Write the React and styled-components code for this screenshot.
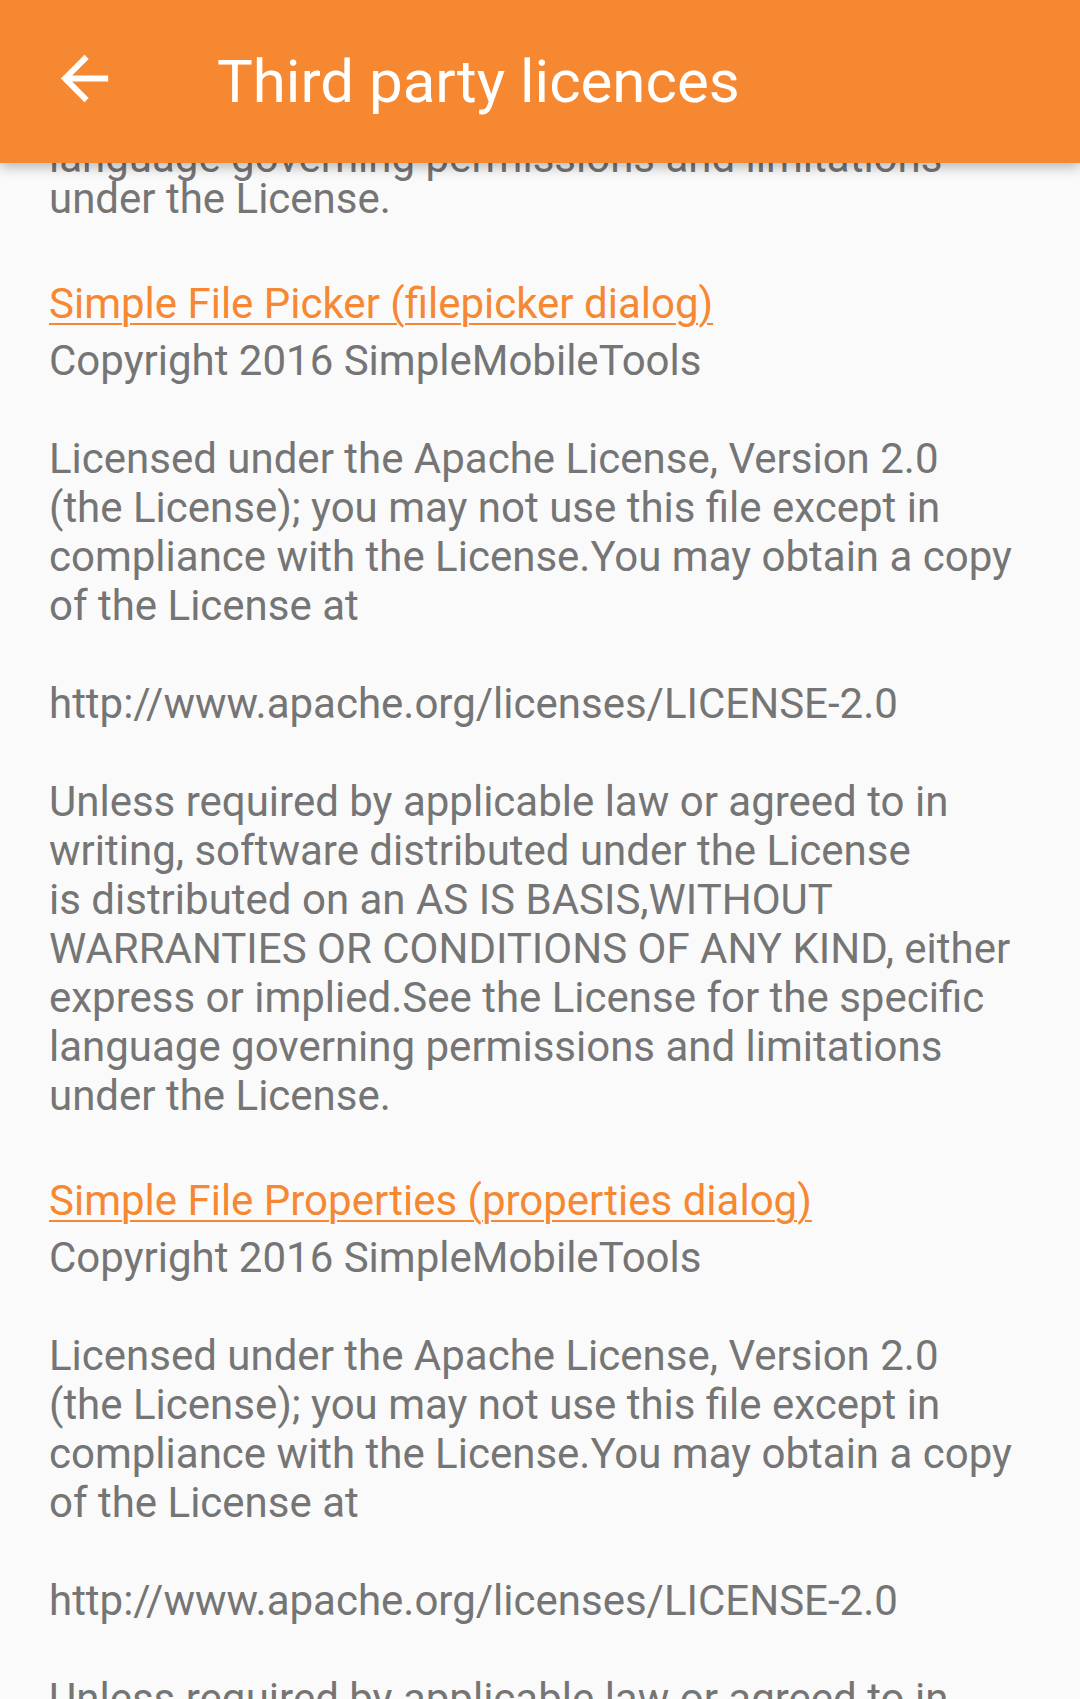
import React from "react";
import styled, { createGlobalStyle } from "styled-components";

const Global = createGlobalStyle`
  html, body { margin: 0; padding: 0; background: #fafafa; }
  body { font-family: Roboto, "Noto Sans", "Liberation Sans", sans-serif; }
`;

const Page = styled.div`
  width: 1080px;
  height: 1699px;
  overflow: hidden;
  position: relative;
  background: #fafafa;
`;

const Toolbar = styled.header`
  position: absolute;
  top: 0;
  left: 0;
  right: 0;
  height: 163px;
  background: #f68832;
  display: flex;
  align-items: center;
  box-shadow: 0 4px 12px rgba(0, 0, 0, 0.28);
  z-index: 2;
`;

const BackButton = styled.button`
  width: 217px;
  height: 163px;
  padding: 0 0 6px 49px;
  margin: 0;
  border: 0;
  background: transparent;
  display: flex;
  align-items: center;
  justify-content: flex-start;
  box-sizing: border-box;
`;

const Title = styled.h1`
  margin: 0;
  font-size: 60px;
  line-height: 70px;
  font-weight: 400;
  color: #ffffff;
  letter-spacing: 0;
`;

const Content = styled.main`
  padding: 137px 48px 0 49px;
  display: flex;
  flex-direction: column;
`;

const Body = styled.p`
  margin: 0 0 ${(p) => (p.$tail ? "4px" : "0")};
  font-size: 42px;
  line-height: ${(p) => (p.$tail ? "41px" : "49px")};
  color: #757575;
  white-space: pre;
`;

const Section = styled.section`
  display: flex;
  flex-direction: column;
  padding-top: 56px;
`;

const LinkTitle = styled.a`
  font-size: 42px;
  line-height: 49px;
  color: #f68832;
  text-decoration: underline;
  text-decoration-thickness: 2px;
  text-underline-offset: 5px;
  margin-bottom: 8px;
  align-self: flex-start;
  white-space: pre;
`;

const licenseText = `Copyright 2016 SimpleMobileTools

Licensed under the Apache License, Version 2.0
(the License); you may not use this file except in
compliance with the License.You may obtain a copy
of the License at

http://www.apache.org/licenses/LICENSE-2.0

Unless required by applicable law or agreed to in
writing, software distributed under the License
is distributed on an AS IS BASIS,WITHOUT
WARRANTIES OR CONDITIONS OF ANY KIND, either
express or implied.See the License for the specific
language governing permissions and limitations
under the License.`;

const sections = [
  "Simple File Picker (filepicker dialog)",
  "Simple File Properties (properties dialog)",
];

const BackArrow = () => (
  <svg width="71" height="71" viewBox="0 0 24 24">
    <path
      fill="#ffffff"
      d="M20 11H7.83l5.59-5.59L12 4l-8 8 8 8 1.41-1.41L7.83 13H20v-2z"
    />
  </svg>
);

export default function App() {
  return (
    <Page>
      <Global />
      <Toolbar>
        <BackButton aria-label="Back">
          <BackArrow />
        </BackButton>
        <Title>Third party licences</Title>
      </Toolbar>
      <Content>
        <Body $tail>{`language governing permissions and limitations
under the License.`}</Body>
        {sections.map((s) => (
          <Section key={s}>
            <LinkTitle href="#">{s}</LinkTitle>
            <Body>{licenseText}</Body>
          </Section>
        ))}
      </Content>
    </Page>
  );
}
